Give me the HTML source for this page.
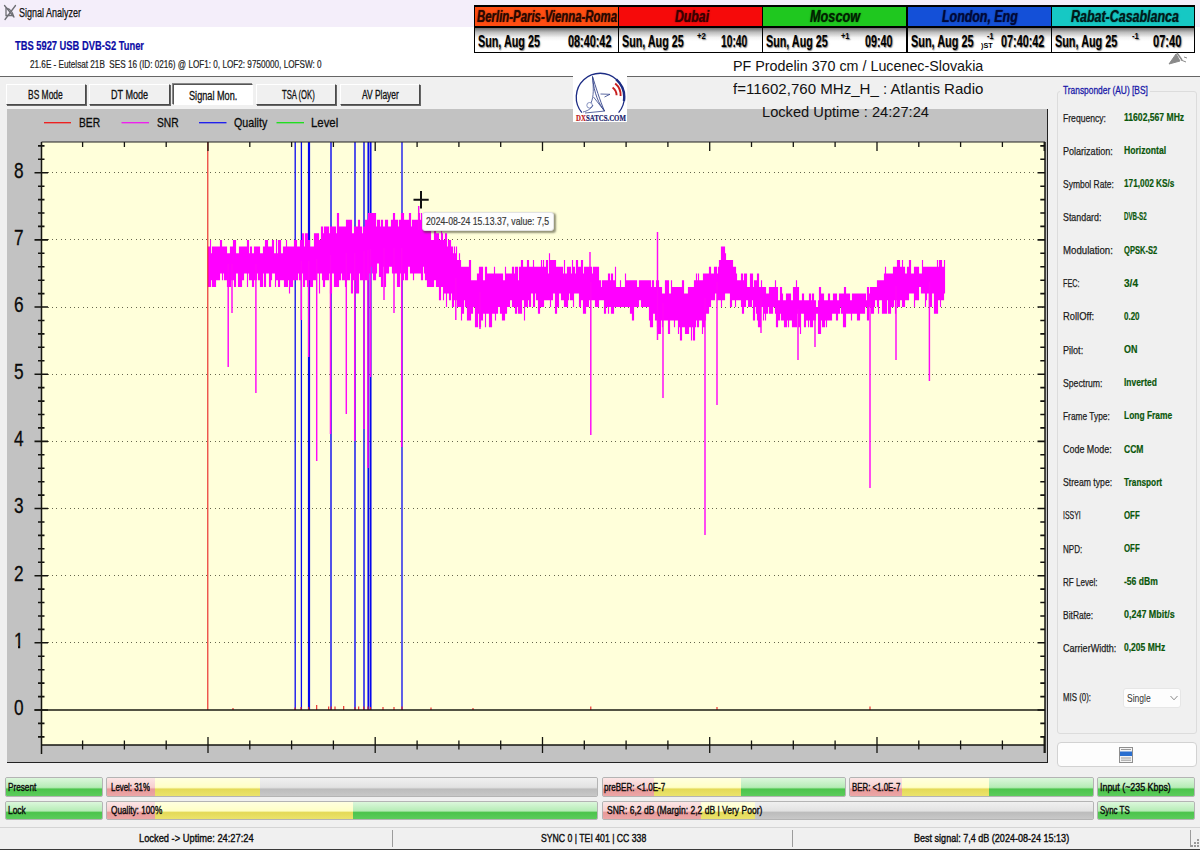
<!DOCTYPE html>
<html lang="en"><head><meta charset="utf-8"><title>Signal Analyzer</title>
<style>

html,body{margin:0;padding:0;}
body{width:1200px;height:850px;overflow:hidden;background:#f0f0f0;}
#root{position:relative;width:1200px;height:850px;overflow:hidden;background:#f0f0f0;font-family:"Liberation Sans",sans-serif;}
#root div,#root svg{position:absolute;box-sizing:border-box;}
.t{position:absolute;white-space:pre;transform-origin:0 50%;display:block;}
.tab{background:#f0f0f0;border:1px solid;border-color:#fff #4a4a4a #4a4a4a #fff;box-shadow:1px 1px 0 #666;}
.tab.sel{background:#fff;border-color:#555 #fff #fff #555;box-shadow:-1px -1px 0 #888;}
.pb{border:1px solid #b4b4b4;border-radius:2px;overflow:hidden;background:#d8d8d8;}
.pb i{position:absolute;top:0;bottom:0;display:block;}
.g{background:linear-gradient(#dcf7dc 0%,#b6ecb6 52%,#4cc44c 62%,#5ccc5c 100%);}
.r{background:linear-gradient(#fce6e6 0%,#f7cfcf 52%,#e79a9a 62%,#eca6a6 100%);}
.y{background:linear-gradient(#ffffe0 0%,#ffffc6 52%,#e4da58 62%,#ebe36c 100%);}
.e{background:linear-gradient(#f0f0f0 0%,#e2e2e2 52%,#bcbcbc 62%,#c8c8c8 100%);}
</style></head>
<body>
<div id="root">
<div style="left:0;top:0;width:1200px;height:27px;background:#f4eefa"></div>
<div style="left:0;top:27px;width:1200px;height:50px;background:#fff"></div>
<div style="left:0;top:76.2px;width:1200px;height:1.3px;background:#666"></div>
<svg style="left:3px;top:4px" width="14" height="17" viewBox="0 0 14 17"><g fill="none" stroke="#6e6e74" stroke-width="1.3" stroke-linecap="round"><path d="M1.5 1.5 L11 13"/><path d="M12.5 1.5 L2 15.5"/><path d="M3 4 L3 11.5 L10.5 11.5"/><path d="M4 4.5 C7 5 9.5 8 10 11"/></g></svg>
<div class="tab" style="left:5.5px;top:84px;width:80.5px;height:21px"></div>
<div class="tab" style="left:89px;top:84px;width:80.5px;height:21px"></div>
<div class="tab sel" style="left:172.5px;top:84px;width:80.0px;height:21px"></div>
<div class="tab" style="left:256px;top:84px;width:80px;height:21px"></div>
<div class="tab" style="left:340px;top:84px;width:80px;height:21px"></div>
<div style="left:473.5px;top:5px;width:721.5px;height:47.5px;background:#000"></div>
<div style="left:475px;top:6.5px;width:142.5px;height:19.5px;background:#ff4d12"></div>
<div style="left:475px;top:28px;width:142.5px;height:23.5px;background:linear-gradient(#6e6e6e 0%,#bdbdbd 18%,#f4f4f4 40%,#ffffff 55%)"></div>
<div style="left:619px;top:6.5px;width:142.5px;height:19.5px;background:#f60a0a"></div>
<div style="left:619px;top:28px;width:142.5px;height:23.5px;background:linear-gradient(#6e6e6e 0%,#bdbdbd 18%,#f4f4f4 40%,#ffffff 55%)"></div>
<div style="left:763px;top:6.5px;width:143.0px;height:19.5px;background:#1fc81f"></div>
<div style="left:763px;top:28px;width:143.0px;height:23.5px;background:linear-gradient(#6e6e6e 0%,#bdbdbd 18%,#f4f4f4 40%,#ffffff 55%)"></div>
<div style="left:907.5px;top:6.5px;width:143.0px;height:19.5px;background:#1450d8"></div>
<div style="left:907.5px;top:28px;width:143.0px;height:23.5px;background:linear-gradient(#6e6e6e 0%,#bdbdbd 18%,#f4f4f4 40%,#ffffff 55%)"></div>
<div style="left:1052px;top:6.5px;width:142.0px;height:19.5px;background:#16c8c4"></div>
<div style="left:1052px;top:28px;width:142.0px;height:23.5px;background:linear-gradient(#6e6e6e 0%,#bdbdbd 18%,#f4f4f4 40%,#ffffff 55%)"></div>
<svg style="left:1168px;top:51px" width="22" height="15" viewBox="0 0 22 15"><g fill="#8a8a8a" stroke="#8a8a8a" stroke-width="1"><path d="M1 13 L8 3 L12 10 Z"/><path d="M9 2 L14 9" fill="none" stroke-width="1.5"/><path d="M13 9 l5 2 m-2 -5 l3 1" fill="none"/></g></svg>
<div style="left:6.5px;top:109px;width:1041px;height:654px;background:#c2c2c2;border-right:1.5px solid #222;border-bottom:1.5px solid #222"></div>
<svg style="left:0;top:100px" width="1060" height="670" viewBox="0 100 1060 670"><rect x="41.5" y="142" width="1003.5" height="603" fill="#ffffda"/><path d="M47.5 642.8H1045M47.5 575.7H1045M47.5 508.5H1045M47.5 441.4H1045M47.5 374.2H1045M47.5 307.0H1045M47.5 239.9H1045M47.5 172.7H1045" stroke="#66664c" stroke-width="1" stroke-dasharray="1 3.4" fill="none" shape-rendering="crispEdges"/><path d="M295.2 142V710" stroke="#0808ee" stroke-width="1.3" fill="none"/><path d="M301.4 142V710" stroke="#0808ee" stroke-width="1.3" fill="none"/><path d="M309 142V710" stroke="#0808ee" stroke-width="2.2" fill="none"/><path d="M331 142V710" stroke="#0808ee" stroke-width="1.4" fill="none"/><path d="M355 142V710" stroke="#0808ee" stroke-width="1.4" fill="none"/><path d="M364 142V710" stroke="#0808ee" stroke-width="1.4" fill="none"/><path d="M368.3 142V710" stroke="#0808ee" stroke-width="1.7" fill="none"/><path d="M370.6 142V710" stroke="#0808ee" stroke-width="1.9" fill="none"/><path d="M402 142V710" stroke="#0808ee" stroke-width="1.3" fill="none"/><path d="M208.5 246.6V286.9M209.5 246.6V286.9M210.5 239.9V286.9M211.5 253.3V280.2M212.5 246.6V286.9M213.5 246.6V286.9M214.5 246.6V286.9M215.5 246.6V286.9M216.5 246.6V280.2M217.5 246.6V280.2M218.5 246.6V280.2M219.5 246.6V280.2M220.5 239.9V273.5M221.5 239.9V273.5M222.5 246.6V280.2M223.5 246.6V273.5M224.5 246.6V280.2M225.5 246.6V280.2M226.5 246.6V280.2M227.5 253.3V286.9M228.5 253.3V286.9M229.5 253.3V286.9M230.5 246.6V286.9M231.5 246.6V280.2M232.5 246.6V280.2M233.5 239.9V280.2M234.5 239.9V286.9M235.5 239.9V286.9M236.5 253.3V273.5M237.5 253.3V273.5M238.5 253.3V286.9M239.5 246.6V286.9M240.5 246.6V286.9M241.5 246.6V286.9M242.5 246.6V280.2M243.5 246.6V280.2M244.5 246.6V273.5M245.5 246.6V273.5M246.5 246.6V273.5M247.5 239.9V286.9M248.5 239.9V273.5M249.5 253.3V280.2M250.5 246.6V280.2M251.5 246.6V280.2M252.5 253.3V286.9M253.5 253.3V286.9M254.5 246.6V280.2M255.5 246.6V280.2M256.5 246.6V280.2M257.5 246.6V273.5M258.5 246.6V280.2M259.5 246.6V280.2M260.5 253.3V286.9M261.5 253.3V286.9M262.5 253.3V286.9M263.5 246.6V273.5M264.5 246.6V286.9M265.5 239.9V286.9M266.5 239.9V273.5M267.5 239.9V273.5M268.5 246.6V273.5M269.5 246.6V286.9M270.5 246.6V286.9M271.5 246.6V280.2M272.5 239.9V273.5M273.5 239.9V273.5M274.5 253.3V273.5M275.5 253.3V286.9M276.5 239.9V280.2M277.5 253.3V280.2M278.5 239.9V286.9M279.5 239.9V286.9M280.5 239.9V280.2M281.5 253.3V280.2M282.5 253.3V280.2M283.5 246.6V280.2M284.5 246.6V286.9M285.5 246.6V286.9M286.5 239.9V286.9M287.5 246.6V286.9M288.5 246.6V280.2M289.5 246.6V293.6M290.5 246.6V286.9M291.5 246.6V286.9M292.5 246.6V286.9M293.5 246.6V280.2M294.5 239.9V280.2M295.5 239.9V280.2M296.5 239.9V280.2M297.5 246.6V280.2M298.5 246.6V273.5M299.5 246.6V280.2M300.5 239.9V280.2M301.5 239.9V273.5M302.5 233.2V273.5M303.5 233.2V286.9M304.5 246.6V286.9M305.5 233.2V280.2M306.5 233.2V280.2M307.5 233.2V286.9M308.5 239.9V280.2M309.5 239.9V280.2M310.5 246.6V286.9M311.5 246.6V286.9M312.5 246.6V286.9M313.5 246.6V280.2M314.5 233.2V280.2M315.5 233.2V280.2M316.5 233.2V280.2M317.5 233.2V273.5M318.5 233.2V273.5M319.5 239.9V293.6M320.5 239.9V273.5M321.5 226.4V273.5M322.5 226.4V280.2M323.5 233.2V286.9M324.5 226.4V286.9M325.5 226.4V280.2M326.5 226.4V280.2M327.5 226.4V280.2M328.5 226.4V280.2M329.5 233.2V273.5M330.5 226.4V293.6M331.5 226.4V293.6M332.5 226.4V273.5M333.5 226.4V273.5M334.5 226.4V286.9M335.5 226.4V286.9M336.5 233.2V286.9M337.5 213.0V286.9M338.5 213.0V286.9M339.5 226.4V280.2M340.5 226.4V280.2M341.5 226.4V273.5M342.5 226.4V280.2M343.5 226.4V280.2M344.5 226.4V280.2M345.5 226.4V286.9M346.5 219.7V280.2M347.5 219.7V280.2M348.5 219.7V280.2M349.5 219.7V280.2M350.5 219.7V273.5M351.5 219.7V293.6M352.5 233.2V293.6M353.5 233.2V280.2M354.5 226.4V280.2M355.5 226.4V280.2M356.5 226.4V293.6M357.5 226.4V293.6M358.5 219.7V293.6M359.5 219.7V273.5M360.5 226.4V280.2M361.5 226.4V280.2M362.5 233.2V280.2M363.5 226.4V280.2M364.5 226.4V280.2M365.5 219.7V280.2M366.5 219.7V280.2M367.5 219.7V280.2M368.5 213.0V280.2M369.5 213.0V273.5M370.5 213.0V266.7M371.5 213.0V266.7M372.5 213.0V273.5M373.5 213.0V280.2M374.5 213.0V280.2M375.5 213.0V280.2M376.5 226.4V273.5M377.5 219.7V263.5M378.5 219.7V263.5M379.5 219.7V276.9M380.5 226.4V276.9M381.5 219.7V286.9M382.5 219.7V286.9M383.5 226.4V266.7M384.5 226.4V286.9M385.5 219.7V286.9M386.5 219.7V273.5M387.5 219.7V273.5M388.5 226.4V273.5M389.5 226.4V266.7M390.5 226.4V266.7M391.5 219.7V266.7M392.5 219.7V273.5M393.5 213.0V273.5M394.5 213.0V273.5M395.5 219.7V273.5M396.5 219.7V273.5M397.5 219.7V286.9M398.5 226.4V286.9M399.5 219.7V286.9M400.5 219.7V273.5M401.5 213.0V280.2M402.5 213.0V280.2M403.5 213.0V280.2M404.5 219.7V273.5M405.5 219.7V280.2M406.5 219.7V280.2M407.5 219.7V280.2M408.5 219.7V266.7M409.5 213.0V266.7M410.5 213.0V273.5M411.5 226.4V273.5M412.5 219.7V273.5M413.5 219.7V280.2M414.5 219.7V273.5M415.5 219.7V273.5M416.5 219.7V273.5M417.5 219.7V273.5M418.5 213.0V273.5M419.5 213.0V273.5M420.5 219.7V273.5M421.5 213.0V280.2M422.5 219.7V280.2M423.5 219.7V266.7M424.5 219.7V273.5M425.5 226.4V280.2M426.5 226.4V280.2M427.5 226.4V286.9M428.5 219.7V286.9M429.5 219.7V286.9M430.5 226.4V286.9M431.5 239.9V286.9M432.5 239.9V286.9M433.5 239.9V286.9M434.5 226.4V280.2M435.5 226.4V280.2M436.5 233.2V286.9M437.5 233.2V286.9M438.5 233.2V286.9M439.5 239.9V300.3M440.5 239.9V300.3M441.5 226.4V286.9M442.5 233.2V286.9M443.5 239.9V300.3M444.5 239.9V293.6M445.5 233.2V293.6M446.5 233.2V307.0M447.5 246.6V293.6M448.5 239.9V293.6M449.5 239.9V300.3M450.5 239.9V300.3M451.5 246.6V293.6M452.5 246.6V307.0M453.5 253.3V307.0M454.5 246.6V300.3M455.5 253.3V300.3M456.5 246.6V300.3M457.5 260.0V307.0M458.5 260.0V307.0M459.5 253.3V307.0M460.5 260.0V307.0M461.5 266.7V320.5M462.5 266.7V313.8M463.5 266.7V313.8M464.5 266.7V300.3M465.5 266.7V307.0M466.5 266.7V307.0M467.5 266.7V320.5M468.5 266.7V320.5M469.5 260.0V320.5M470.5 260.0V320.5M471.5 280.2V313.8M472.5 280.2V313.8M473.5 280.2V307.0M474.5 280.2V307.0M475.5 280.2V327.2M476.5 280.2V327.2M477.5 273.5V327.2M478.5 273.5V313.8M479.5 266.7V327.2M480.5 266.7V327.2M481.5 266.7V320.5M482.5 266.7V320.5M483.5 280.2V313.8M484.5 280.2V313.8M485.5 266.7V327.2M486.5 266.7V313.8M487.5 273.5V313.8M488.5 273.5V313.8M489.5 273.5V327.2M490.5 273.5V327.2M491.5 273.5V327.2M492.5 273.5V313.8M493.5 273.5V313.8M494.5 266.7V313.8M495.5 273.5V320.5M496.5 273.5V313.8M497.5 273.5V313.8M498.5 273.5V307.0M499.5 273.5V307.0M500.5 273.5V313.8M501.5 273.5V313.8M502.5 273.5V320.5M503.5 280.2V320.5M504.5 280.2V320.5M505.5 266.7V313.8M506.5 273.5V313.8M507.5 273.5V307.0M508.5 273.5V307.0M509.5 273.5V307.0M510.5 273.5V300.3M511.5 273.5V300.3M512.5 266.7V307.0M513.5 266.7V307.0M514.5 273.5V307.0M515.5 266.7V313.8M516.5 266.7V313.8M517.5 266.7V307.0M518.5 280.2V313.8M519.5 266.7V313.8M520.5 266.7V313.8M521.5 260.0V313.8M522.5 260.0V300.3M523.5 266.7V300.3M524.5 266.7V320.5M525.5 266.7V307.0M526.5 266.7V307.0M527.5 260.0V307.0M528.5 260.0V300.3M529.5 266.7V307.0M530.5 266.7V307.0M531.5 266.7V293.6M532.5 266.7V293.6M533.5 260.0V307.0M534.5 266.7V307.0M535.5 266.7V293.6M536.5 266.7V300.3M537.5 266.7V300.3M538.5 266.7V313.8M539.5 266.7V313.8M540.5 266.7V307.0M541.5 260.0V307.0M542.5 266.7V307.0M543.5 260.0V307.0M544.5 266.7V300.3M545.5 266.7V300.3M546.5 260.0V300.3M547.5 260.0V300.3M548.5 273.5V300.3M549.5 253.3V300.3M550.5 260.0V307.0M551.5 260.0V300.3M552.5 260.0V300.3M553.5 260.0V293.6M554.5 260.0V293.6M555.5 260.0V313.8M556.5 266.7V313.8M557.5 266.7V307.0M558.5 266.7V307.0M559.5 266.7V293.6M560.5 266.7V293.6M561.5 266.7V300.3M562.5 266.7V300.3M563.5 273.5V300.3M564.5 260.0V307.0M565.5 273.5V307.0M566.5 273.5V307.0M567.5 266.7V307.0M568.5 266.7V300.3M569.5 266.7V293.6M570.5 266.7V300.3M571.5 273.5V300.3M572.5 260.0V300.3M573.5 266.7V307.0M574.5 266.7V293.6M575.5 273.5V293.6M576.5 260.0V293.6M577.5 260.0V293.6M578.5 266.7V293.6M579.5 266.7V307.0M580.5 266.7V307.0M581.5 260.0V300.3M582.5 260.0V300.3M583.5 273.5V313.8M584.5 266.7V313.8M585.5 266.7V313.8M586.5 266.7V307.0M587.5 266.7V307.0M588.5 266.7V307.0M589.5 266.7V300.3M590.5 266.7V300.3M591.5 266.7V300.3M592.5 273.5V300.3M593.5 266.7V300.3M594.5 266.7V300.3M595.5 266.7V307.0M596.5 266.7V307.0M597.5 266.7V307.0M598.5 266.7V307.0M599.5 280.2V300.3M600.5 280.2V300.3M601.5 286.9V300.3M602.5 280.2V300.3M603.5 280.2V300.3M604.5 280.2V313.8M605.5 280.2V313.8M606.5 280.2V307.0M607.5 280.2V307.0M608.5 273.5V313.8M609.5 273.5V307.0M610.5 280.2V307.0M611.5 273.5V313.8M612.5 273.5V313.8M613.5 280.2V313.8M614.5 280.2V307.0M615.5 266.7V307.0M616.5 286.9V307.0M617.5 286.9V307.0M618.5 286.9V307.0M619.5 286.9V307.0M620.5 280.2V307.0M621.5 286.9V307.0M622.5 286.9V307.0M623.5 286.9V307.0M624.5 286.9V307.0M625.5 273.5V307.0M626.5 280.2V307.0M627.5 280.2V307.0M628.5 280.2V307.0M629.5 280.2V307.0M630.5 280.2V313.8M631.5 280.2V313.8M632.5 280.2V320.5M633.5 280.2V320.5M634.5 280.2V307.0M635.5 280.2V307.0M636.5 280.2V307.0M637.5 286.9V307.0M638.5 286.9V307.0M639.5 280.2V300.3M640.5 280.2V300.3M641.5 280.2V307.0M642.5 280.2V307.0M643.5 280.2V307.0M644.5 280.2V307.0M645.5 280.2V307.0M646.5 280.2V307.0M647.5 280.2V307.0M648.5 280.2V307.0M649.5 280.2V320.5M650.5 280.2V327.2M651.5 286.9V327.2M652.5 280.2V327.2M653.5 280.2V313.8M654.5 286.9V313.8M655.5 286.9V320.5M656.5 280.2V320.5M657.5 280.2V327.2M658.5 280.2V333.9M659.5 286.9V333.9M660.5 286.9V333.9M661.5 286.9V320.5M662.5 293.6V327.2M663.5 293.6V320.5M664.5 293.6V320.5M665.5 280.2V320.5M666.5 280.2V320.5M667.5 280.2V320.5M668.5 280.2V333.9M669.5 293.6V333.9M670.5 293.6V320.5M671.5 280.2V320.5M672.5 286.9V320.5M673.5 286.9V320.5M674.5 286.9V327.2M675.5 286.9V320.5M676.5 286.9V320.5M677.5 286.9V320.5M678.5 286.9V333.9M679.5 286.9V327.2M680.5 286.9V340.6M681.5 286.9V340.6M682.5 280.2V327.2M683.5 280.2V327.2M684.5 293.6V327.2M685.5 293.6V333.9M686.5 293.6V333.9M687.5 293.6V333.9M688.5 286.9V333.9M689.5 286.9V327.2M690.5 286.9V327.2M691.5 286.9V340.6M692.5 286.9V327.2M693.5 286.9V340.6M694.5 280.2V340.6M695.5 280.2V327.2M696.5 273.5V320.5M697.5 280.2V327.2M698.5 273.5V327.2M699.5 280.2V320.5M700.5 280.2V320.5M701.5 280.2V320.5M702.5 280.2V333.9M703.5 273.5V327.2M704.5 273.5V327.2M705.5 273.5V320.5M706.5 273.5V313.8M707.5 273.5V313.8M708.5 273.5V313.8M709.5 266.7V307.0M710.5 266.7V307.0M711.5 273.5V300.3M712.5 273.5V300.3M713.5 273.5V300.3M714.5 266.7V300.3M715.5 266.7V293.6M716.5 266.7V293.6M717.5 273.5V300.3M718.5 266.7V300.3M719.5 260.0V300.3M720.5 260.0V300.3M721.5 246.6V307.0M722.5 246.6V300.3M723.5 246.6V300.3M724.5 246.6V300.3M725.5 253.3V293.6M726.5 260.0V293.6M727.5 260.0V293.6M728.5 260.0V293.6M729.5 260.0V293.6M730.5 260.0V307.0M731.5 260.0V307.0M732.5 260.0V300.3M733.5 266.7V300.3M734.5 266.7V300.3M735.5 266.7V307.0M736.5 273.5V300.3M737.5 280.2V300.3M738.5 280.2V300.3M739.5 280.2V300.3M740.5 280.2V300.3M741.5 273.5V307.0M742.5 273.5V313.8M743.5 280.2V313.8M744.5 273.5V307.0M745.5 273.5V307.0M746.5 273.5V300.3M747.5 286.9V300.3M748.5 286.9V307.0M749.5 286.9V307.0M750.5 273.5V307.0M751.5 273.5V307.0M752.5 273.5V300.3M753.5 286.9V320.5M754.5 280.2V320.5M755.5 280.2V307.0M756.5 280.2V313.8M757.5 273.5V320.5M758.5 273.5V327.2M759.5 286.9V327.2M760.5 286.9V327.2M761.5 280.2V307.0M762.5 286.9V307.0M763.5 286.9V320.5M764.5 286.9V313.8M765.5 286.9V320.5M766.5 293.6V313.8M767.5 293.6V313.8M768.5 293.6V307.0M769.5 286.9V313.8M770.5 286.9V313.8M771.5 286.9V313.8M772.5 286.9V313.8M773.5 286.9V307.0M774.5 286.9V307.0M775.5 280.2V313.8M776.5 286.9V327.2M777.5 286.9V327.2M778.5 300.3V320.5M779.5 300.3V320.5M780.5 286.9V313.8M781.5 286.9V320.5M782.5 293.6V320.5M783.5 300.3V320.5M784.5 300.3V327.2M785.5 300.3V327.2M786.5 293.6V327.2M787.5 293.6V320.5M788.5 293.6V327.2M789.5 293.6V320.5M790.5 293.6V320.5M791.5 300.3V320.5M792.5 300.3V327.2M793.5 286.9V327.2M794.5 286.9V327.2M795.5 286.9V327.2M796.5 280.2V327.2M797.5 286.9V313.8M798.5 286.9V327.2M799.5 300.3V327.2M800.5 300.3V333.9M801.5 300.3V313.8M802.5 293.6V313.8M803.5 293.6V313.8M804.5 300.3V327.2M805.5 300.3V327.2M806.5 300.3V320.5M807.5 300.3V320.5M808.5 300.3V327.2M809.5 293.6V320.5M810.5 293.6V327.2M811.5 300.3V327.2M812.5 293.6V327.2M813.5 293.6V320.5M814.5 300.3V320.5M815.5 300.3V320.5M816.5 307.0V313.8M817.5 307.0V313.8M818.5 300.3V333.9M819.5 286.9V333.9M820.5 286.9V333.9M821.5 293.6V320.5M822.5 293.6V327.2M823.5 293.6V327.2M824.5 300.3V327.2M825.5 300.3V320.5M826.5 300.3V327.2M827.5 300.3V320.5M828.5 293.6V320.5M829.5 293.6V320.5M830.5 300.3V320.5M831.5 300.3V320.5M832.5 300.3V313.8M833.5 293.6V313.8M834.5 293.6V313.8M835.5 293.6V313.8M836.5 293.6V320.5M837.5 300.3V320.5M838.5 300.3V313.8M839.5 293.6V313.8M840.5 293.6V307.0M841.5 293.6V313.8M842.5 293.6V313.8M843.5 293.6V327.2M844.5 286.9V327.2M845.5 286.9V327.2M846.5 293.6V313.8M847.5 293.6V313.8M848.5 293.6V313.8M849.5 293.6V313.8M850.5 300.3V313.8M851.5 300.3V320.5M852.5 293.6V313.8M853.5 293.6V313.8M854.5 293.6V313.8M855.5 293.6V313.8M856.5 293.6V313.8M857.5 293.6V320.5M858.5 293.6V320.5M859.5 293.6V320.5M860.5 293.6V313.8M861.5 293.6V313.8M862.5 293.6V313.8M863.5 293.6V313.8M864.5 293.6V313.8M865.5 293.6V307.0M866.5 300.3V307.0M867.5 286.9V320.5M868.5 286.9V320.5M869.5 293.6V307.0M870.5 286.9V307.0M871.5 286.9V313.8M872.5 286.9V313.8M873.5 286.9V313.8M874.5 286.9V307.0M875.5 286.9V300.3M876.5 286.9V300.3M877.5 280.2V307.0M878.5 280.2V313.8M879.5 280.2V300.3M880.5 280.2V300.3M881.5 280.2V300.3M882.5 280.2V313.8M883.5 280.2V313.8M884.5 273.5V313.8M885.5 266.7V313.8M886.5 273.5V313.8M887.5 273.5V300.3M888.5 273.5V313.8M889.5 273.5V313.8M890.5 273.5V313.8M891.5 273.5V307.0M892.5 273.5V307.0M893.5 266.7V307.0M894.5 266.7V300.3M895.5 266.7V313.8M896.5 266.7V300.3M897.5 260.0V307.0M898.5 260.0V307.0M899.5 260.0V307.0M900.5 266.7V300.3M901.5 266.7V300.3M902.5 260.0V307.0M903.5 266.7V307.0M904.5 266.7V307.0M905.5 273.5V300.3M906.5 273.5V300.3M907.5 266.7V300.3M908.5 266.7V300.3M909.5 260.0V293.6M910.5 260.0V293.6M911.5 273.5V293.6M912.5 273.5V293.6M913.5 273.5V293.6M914.5 266.7V307.0M915.5 266.7V300.3M916.5 266.7V300.3M917.5 266.7V300.3M918.5 266.7V300.3M919.5 273.5V286.9M920.5 273.5V286.9M921.5 273.5V293.6M922.5 260.0V293.6M923.5 266.7V293.6M924.5 266.7V293.6M925.5 266.7V307.0M926.5 266.7V300.3M927.5 266.7V293.6M928.5 266.7V293.6M929.5 266.7V307.0M930.5 266.7V307.0M931.5 266.7V307.0M932.5 266.7V293.6M933.5 266.7V293.6M934.5 266.7V313.8M935.5 266.7V313.8M936.5 266.7V313.8M937.5 260.0V313.8M938.5 266.7V300.3M939.5 260.0V300.3M940.5 260.0V307.0M941.5 260.0V300.3M942.5 266.7V300.3M943.5 266.7V300.3M944.5 260.0V293.6" stroke="#ff00ff" stroke-width="1.15" fill="none"/><path d="M228.2 264V367M232 264V313M255.9 264V393M301.3 261V320M308.7 261V357M316.7 259V461M330.5 255V434M346.3 253V414M354.7 253V441M364 251V429M368 250V468M370.5 249V377M401.7 248V447M384 248V300M394 248V313M455.8 278V320M480 292V329M590.8 282V435M663 303V398M705 298V535M717 282V405M761 298V333M798 309V360M815 310V347M870 302V488M896 286V360M929.4 282V381M657.5 300V232M657.5 300V340M418.7 230V206M590 270V252" stroke="#ff08f8" stroke-width="1.45" fill="none"/><path d="M207.8 142V710M233 710v-2M295 710v-2.5M301 710v-3M308.7 710v-3M316.7 710v-5M328.7 710v-3.5M331.2 710v-3.5M335 710v-3.5M343.7 710v-4M355 710v-3M358.7 710v-3.5M363.7 710v-3.5M368 710v-3.5M370.5 710v-3M383 710v-3M394 710v-3M402 710v-3.5M431 710v-2.5M473 710v-2M590.8 710v-3.5M717 710v-3M870 710v-3.5" stroke="#e82020" stroke-width="1.1" fill="none"/><path d="M34.5 710H1045" stroke="#1a1a10" stroke-width="1.6" fill="none"/><path d="M41.5 142H1045" stroke="#222" stroke-width="1" fill="none"/><path d="M41.5 142V754M1045 142V753M41.5 745H1045" stroke="#151510" stroke-width="1.5" fill="none"/><path d="M38.0 736.9H44.5M1040.3 736.9H1045M38.0 723.4H44.5M1040.3 723.4H1045M34.5 710.0H48.0M1037.5 710.0H1045M38.0 696.6H44.5M1040.3 696.6H1045M38.0 683.1H44.5M1040.3 683.1H1045M38.0 669.7H44.5M1040.3 669.7H1045M38.0 656.3H44.5M1040.3 656.3H1045M34.5 642.8H48.0M1037.5 642.8H1045M38.0 629.4H44.5M1040.3 629.4H1045M38.0 616.0H44.5M1040.3 616.0H1045M38.0 602.5H44.5M1040.3 602.5H1045M38.0 589.1H44.5M1040.3 589.1H1045M34.5 575.7H48.0M1037.5 575.7H1045M38.0 562.2H44.5M1040.3 562.2H1045M38.0 548.8H44.5M1040.3 548.8H1045M38.0 535.4H44.5M1040.3 535.4H1045M38.0 522.0H44.5M1040.3 522.0H1045M34.5 508.5H48.0M1037.5 508.5H1045M38.0 495.1H44.5M1040.3 495.1H1045M38.0 481.7H44.5M1040.3 481.7H1045M38.0 468.2H44.5M1040.3 468.2H1045M38.0 454.8H44.5M1040.3 454.8H1045M34.5 441.4H48.0M1037.5 441.4H1045M38.0 427.9H44.5M1040.3 427.9H1045M38.0 414.5H44.5M1040.3 414.5H1045M38.0 401.1H44.5M1040.3 401.1H1045M38.0 387.6H44.5M1040.3 387.6H1045M34.5 374.2H48.0M1037.5 374.2H1045M38.0 360.8H44.5M1040.3 360.8H1045M38.0 347.3H44.5M1040.3 347.3H1045M38.0 333.9H44.5M1040.3 333.9H1045M38.0 320.5H44.5M1040.3 320.5H1045M34.5 307.0H48.0M1037.5 307.0H1045M38.0 293.6H44.5M1040.3 293.6H1045M38.0 280.2H44.5M1040.3 280.2H1045M38.0 266.7H44.5M1040.3 266.7H1045M38.0 253.3H44.5M1040.3 253.3H1045M34.5 239.9H48.0M1037.5 239.9H1045M38.0 226.4H44.5M1040.3 226.4H1045M38.0 213.0H44.5M1040.3 213.0H1045M38.0 199.6H44.5M1040.3 199.6H1045M38.0 186.2H44.5M1040.3 186.2H1045M34.5 172.7H48.0M1037.5 172.7H1045M38.0 159.3H44.5M1040.3 159.3H1045M38.0 145.9H44.5M1040.3 145.9H1045" stroke="#151510" stroke-width="1.6" fill="none"/><path d="M82.6 142v5M82.6 740.5V749.5M124.4 142v5M124.4 740.5V749.5M166.2 142v5M166.2 740.5V749.5M208.0 142v9M208.0 737V753M249.8 142v5M249.8 740.5V749.5M291.6 142v5M291.6 740.5V749.5M333.4 142v5M333.4 740.5V749.5M375.2 142v9M375.2 737V753M417.1 142v5M417.1 740.5V749.5M458.9 142v5M458.9 740.5V749.5M500.7 142v5M500.7 740.5V749.5M542.5 142v9M542.5 737V753M584.3 142v5M584.3 740.5V749.5M626.1 142v5M626.1 740.5V749.5M667.9 142v5M667.9 740.5V749.5M709.7 142v9M709.7 737V753M751.5 142v5M751.5 740.5V749.5M793.3 142v5M793.3 740.5V749.5M835.1 142v5M835.1 740.5V749.5M877.0 142v9M877.0 737V753M918.8 142v5M918.8 740.5V749.5M960.6 142v5M960.6 740.5V749.5M1002.4 142v5M1002.4 740.5V749.5M1044.2 142v9M1044.2 737V753" stroke="#151510" stroke-width="1.3" fill="none"/><path d="M44 122.7H71" stroke="#f01818" stroke-width="1.3" fill="none"/><path d="M121.5 122.7H149" stroke="#f018f0" stroke-width="1.3" fill="none"/><path d="M199 122.7H226.5" stroke="#1818f0" stroke-width="1.3" fill="none"/><path d="M276.5 122.7H304" stroke="#18e018" stroke-width="1.3" fill="none"/></svg>
<div style="left:421.5px;top:211.5px;width:132px;height:19.5px;background:#fdfdfd;border:1px solid #e2e2e2;border-radius:3px;box-shadow:1.5px 1.5px 2px rgba(60,60,40,.55)"></div>
<svg style="left:412px;top:190px" width="19" height="20" viewBox="0 0 19 20"><path d="M9 1V18.5M1.5 9.7H16.7" stroke="#111" stroke-width="2" fill="none"/></svg>
<div style="left:573px;top:70px;width:54px;height:52px;background:#fff"></div>
<svg style="left:573px;top:70px" width="54" height="52" viewBox="0 0 54 52">
<path d="M45.6 42.7 A24 24 0 1 0 8.9 42.7" fill="none" stroke="#1c2c84" stroke-width="1.3"/>
<path d="M50.9 31 A24 24 0 0 0 43.2 9.4" fill="none" stroke="#1c2c84" stroke-width="2.4"/>
<path d="M42.2 13.5 A15 15 0 0 1 47.6 26" fill="none" stroke="#c81e1e" stroke-width="1.9"/>
<path d="M39.6 17.5 A10 10 0 0 1 43.6 25.2" fill="none" stroke="#c81e1e" stroke-width="1.9"/>
<path d="M19.5 6.5 C22.5 16 27 31 31.5 41 C26 34 21 24 19.5 6.5 Z" fill="#fdfdff" stroke="#34448a" stroke-width="0.9"/>
<path d="M19.5 6.5 C20.5 18 21 26 18 33 M20.5 27 L31.5 41" fill="none" stroke="#34448a" stroke-width="0.8"/>
<path d="M27.5 24 L37 24.3 L31.5 27" fill="none" stroke="#34448a" stroke-width="0.8"/>
<circle cx="16.6" cy="35.3" r="2.8" fill="none" stroke="#7886b8" stroke-width="0.9"/>
<path d="M10 42 C14 41 17.5 39.5 20 35 M12 43 L32 41" fill="none" stroke="#34448a" stroke-width="0.8"/>
</svg>
<div style="left:1056.5px;top:90.5px;width:140px;height:643px;border:1px solid #dcdcdc;border-radius:3px"></div>
<div style="left:1060px;top:84px;width:90px;height:14px;background:#f0f0f0"></div>
<div style="left:1122.5px;top:688px;width:58.5px;height:19.5px;background:#fdfdfd;border:1px solid #e6e6e6;border-radius:3px"></div>
<svg style="left:1168px;top:693px" width="12" height="10" viewBox="0 0 12 10"><path d="M2.5 3 L6 6.8 L9.5 3" fill="none" stroke="#8a8a8a" stroke-width="1"/></svg>
<div style="left:1056.5px;top:742px;width:140px;height:24.5px;background:#fdfdfd;border:1px solid #d2d2d2;border-radius:4px"></div>
<svg style="left:1119px;top:746.5px" width="14" height="16" viewBox="0 0 14 16"><rect x="0.5" y="0.5" width="13" height="15" fill="#f4f4f4" stroke="#8e8e8e"/><rect x="1" y="4.5" width="12" height="4.5" fill="#2a6fd0"/><path d="M2 2.5h10M2 11h10M2 13.2h10" stroke="#9a9a9a" stroke-width="1"/></svg>
<div class="pb" style="left:5px;top:777px;width:97.5px;height:19.5px"><i class="g" style="left:-1.0px;width:98.5px"></i></div>
<div class="pb" style="left:5px;top:800.5px;width:97.5px;height:19.5px"><i class="g" style="left:-1.0px;width:98.5px"></i></div>
<div class="pb" style="left:106px;top:777px;width:492px;height:19.5px"><i class="r" style="left:-1.0px;width:49.5px"></i><i class="y" style="left:48.0px;width:105.5px"></i><i class="e" style="left:153.0px;width:338.5px"></i></div>
<div class="pb" style="left:106px;top:800.5px;width:492px;height:19.5px"><i class="r" style="left:-1.0px;width:49.5px"></i><i class="y" style="left:48.0px;width:198.0px"></i><i class="g" style="left:245.5px;width:246.0px"></i></div>
<div class="pb" style="left:601.5px;top:777px;width:244.5px;height:19.5px"><i class="r" style="left:-1.0px;width:53.0px"></i><i class="y" style="left:51.5px;width:87.5px"></i><i class="g" style="left:138.5px;width:105.5px"></i></div>
<div class="pb" style="left:848.5px;top:777px;width:245.0px;height:19.5px"><i class="r" style="left:-1.0px;width:54.0px"></i><i class="y" style="left:52.5px;width:87.5px"></i><i class="g" style="left:139.5px;width:105.5px"></i></div>
<div class="pb" style="left:601.5px;top:800.5px;width:492.0px;height:19.5px"><i class="r" style="left:-1.0px;width:100.0px"></i><i class="y" style="left:98.5px;width:54.5px"></i><i class="e" style="left:152.5px;width:339.5px"></i></div>
<div class="pb" style="left:1097px;top:777px;width:98px;height:19.5px"><i class="g" style="left:-1.0px;width:98.5px"></i></div>
<div class="pb" style="left:1097px;top:800.5px;width:98px;height:19.5px"><i class="g" style="left:-1.0px;width:98.5px"></i></div>
<div style="left:0;top:826.5px;width:1200px;height:1px;background:#d4d4d4"></div>
<div style="left:0;top:848.5px;width:1200px;height:1.5px;background:#3a3a3a"></div>
<div style="left:392px;top:830px;width:1px;height:17px;background:#9c9c9c"></div>
<div style="left:792px;top:830px;width:1px;height:17px;background:#9c9c9c"></div>
<div style="left:1190px;top:830px;width:1px;height:17px;background:#9c9c9c"></div>
<svg style="left:1191px;top:838px" width="9" height="10" viewBox="0 0 9 10"><g fill="#9a9a9a"><rect x="6" y="1" width="2" height="2"/><rect x="3" y="4" width="2" height="2"/><rect x="6" y="4" width="2" height="2"/><rect x="0" y="7" width="2" height="2"/><rect x="3" y="7" width="2" height="2"/><rect x="6" y="7" width="2" height="2"/></g></svg>
<span class="t" style='left:19.0px;top:3.6px;height:18px;line-height:18px;font-size:13.5px;font-weight:normal;color:#111;font-style:normal;font-family:"Liberation Sans", sans-serif;transform:scaleX(0.6667);-webkit-text-stroke:0.25px #111;'>Signal Analyzer</span>
<span class="t" style='left:14.5px;top:38.2px;height:16px;line-height:16px;font-size:12.5px;font-weight:bold;color:#0c0ca6;font-style:normal;font-family:"Liberation Sans", sans-serif;transform:scaleX(0.7468);-webkit-text-stroke:0.2px #0c0ca6;'>TBS 5927 USB DVB-S2 Tuner</span>
<span class="t" style='left:30.0px;top:56.7px;height:14px;line-height:14px;font-size:11px;font-weight:normal;color:#222;font-style:normal;font-family:"Liberation Sans", sans-serif;transform:scaleX(0.7417);-webkit-text-stroke:0.2px #222;'>21.6E - Eutelsat 21B  SES 16 (ID: 0216) @ LOF1: 0, LOF2: 9750000, LOFSW: 0</span>
<span class="t" style='left:28.0px;top:87.0px;height:16px;line-height:16px;font-size:12px;font-weight:normal;color:#111;font-style:normal;font-family:"Liberation Sans", sans-serif;transform:scaleX(0.7041);-webkit-text-stroke:0.3px #111;'>BS Mode</span>
<span class="t" style='left:110.5px;top:87.0px;height:16px;line-height:16px;font-size:12px;font-weight:normal;color:#111;font-style:normal;font-family:"Liberation Sans", sans-serif;transform:scaleX(0.7551);-webkit-text-stroke:0.3px #111;'>DT Mode</span>
<span class="t" style='left:189.0px;top:88.0px;height:16px;line-height:16px;font-size:12px;font-weight:normal;color:#111;font-style:normal;font-family:"Liberation Sans", sans-serif;transform:scaleX(0.7619);-webkit-text-stroke:0.3px #111;'>Signal Mon.</span>
<span class="t" style='left:281.5px;top:87.0px;height:16px;line-height:16px;font-size:12px;font-weight:normal;color:#111;font-style:normal;font-family:"Liberation Sans", sans-serif;transform:scaleX(0.6373);-webkit-text-stroke:0.3px #111;'>TSA (OK)</span>
<span class="t" style='left:361.5px;top:87.0px;height:16px;line-height:16px;font-size:12px;font-weight:normal;color:#111;font-style:normal;font-family:"Liberation Sans", sans-serif;transform:scaleX(0.7019);-webkit-text-stroke:0.3px #111;'>AV Player</span>
<span class="t" style='left:477.0px;top:5.5px;height:21px;line-height:21px;font-size:16.5px;font-weight:bold;color:#2a0800;font-style:italic;font-family:"Liberation Sans", sans-serif;transform:scaleX(0.6897);text-shadow:0 0 1.5px rgba(0,0,0,.7);'>Berlin-Paris-Vienna-Roma</span>
<span class="t" style='left:674.5px;top:5.5px;height:21px;line-height:21px;font-size:16.5px;font-weight:bold;color:#3a0000;font-style:italic;font-family:"Liberation Sans", sans-serif;transform:scaleX(0.7435);text-shadow:0 0 1.5px rgba(0,0,0,.7);'>Dubai</span>
<span class="t" style='left:810.0px;top:5.5px;height:21px;line-height:21px;font-size:16.5px;font-weight:bold;color:#002200;font-style:italic;font-family:"Liberation Sans", sans-serif;transform:scaleX(0.7692);text-shadow:0 0 1.5px rgba(0,0,0,.7);'>Moscow</span>
<span class="t" style='left:941.6px;top:5.5px;height:21px;line-height:21px;font-size:16.5px;font-weight:bold;color:#00083a;font-style:italic;font-family:"Liberation Sans", sans-serif;transform:scaleX(0.7515);text-shadow:0 0 1.5px rgba(0,0,0,.7);'>London, Eng</span>
<span class="t" style='left:1070.5px;top:5.5px;height:21px;line-height:21px;font-size:16.5px;font-weight:bold;color:#001a1a;font-style:italic;font-family:"Liberation Sans", sans-serif;transform:scaleX(0.7545);text-shadow:0 0 1.5px rgba(0,0,0,.7);'>Rabat-Casablanca</span>
<span class="t" style='left:478.0px;top:31.3px;height:21px;line-height:21px;font-size:16px;font-weight:bold;color:#000;font-style:normal;font-family:"Liberation Sans", sans-serif;transform:scaleX(0.6739);text-shadow:1px 1px 1.5px rgba(0,0,0,.55);'>Sun, Aug 25</span>
<span class="t" style='left:622.0px;top:31.3px;height:21px;line-height:21px;font-size:16px;font-weight:bold;color:#000;font-style:normal;font-family:"Liberation Sans", sans-serif;transform:scaleX(0.6707);text-shadow:1px 1px 1.5px rgba(0,0,0,.55);'>Sun, Aug 25</span>
<span class="t" style='left:766.2px;top:31.3px;height:21px;line-height:21px;font-size:16px;font-weight:bold;color:#000;font-style:normal;font-family:"Liberation Sans", sans-serif;transform:scaleX(0.6717);text-shadow:1px 1px 1.5px rgba(0,0,0,.55);'>Sun, Aug 25</span>
<span class="t" style='left:910.8px;top:31.3px;height:21px;line-height:21px;font-size:16px;font-weight:bold;color:#000;font-style:normal;font-family:"Liberation Sans", sans-serif;transform:scaleX(0.6804);text-shadow:1px 1px 1.5px rgba(0,0,0,.55);'>Sun, Aug 25</span>
<span class="t" style='left:1055.0px;top:31.3px;height:21px;line-height:21px;font-size:16px;font-weight:bold;color:#000;font-style:normal;font-family:"Liberation Sans", sans-serif;transform:scaleX(0.6783);text-shadow:1px 1px 1.5px rgba(0,0,0,.55);'>Sun, Aug 25</span>
<span class="t" style='left:568.3px;top:31.3px;height:21px;line-height:21px;font-size:16px;font-weight:bold;color:#000;font-style:normal;font-family:"Liberation Sans", sans-serif;transform:scaleX(0.6781);text-shadow:1px 1px 1.5px rgba(0,0,0,.55);'>08:40:42</span>
<span class="t" style='left:720.7px;top:31.3px;height:21px;line-height:21px;font-size:16px;font-weight:bold;color:#000;font-style:normal;font-family:"Liberation Sans", sans-serif;transform:scaleX(0.6415);text-shadow:1px 1px 1.5px rgba(0,0,0,.55);'>10:40</span>
<span class="t" style='left:864.5px;top:31.3px;height:21px;line-height:21px;font-size:16px;font-weight:bold;color:#000;font-style:normal;font-family:"Liberation Sans", sans-serif;transform:scaleX(0.6707);text-shadow:1px 1px 1.5px rgba(0,0,0,.55);'>09:40</span>
<span class="t" style='left:1001.0px;top:31.3px;height:21px;line-height:21px;font-size:16px;font-weight:bold;color:#000;font-style:normal;font-family:"Liberation Sans", sans-serif;transform:scaleX(0.6766);text-shadow:1px 1px 1.5px rgba(0,0,0,.55);'>07:40:42</span>
<span class="t" style='left:1153.0px;top:31.3px;height:21px;line-height:21px;font-size:16px;font-weight:bold;color:#000;font-style:normal;font-family:"Liberation Sans", sans-serif;transform:scaleX(0.6951);text-shadow:1px 1px 1.5px rgba(0,0,0,.55);'>07:40</span>
<span class="t" style='left:697.0px;top:30.2px;height:12px;line-height:12px;font-size:9px;font-weight:bold;color:#000;font-style:normal;font-family:"Liberation Sans", sans-serif;transform:scaleX(0.8500);text-shadow:1px 1px 1.5px rgba(0,0,0,.55);'>+2</span>
<span class="t" style='left:841.2px;top:30.2px;height:12px;line-height:12px;font-size:9px;font-weight:bold;color:#000;font-style:normal;font-family:"Liberation Sans", sans-serif;transform:scaleX(0.8300);text-shadow:1px 1px 1.5px rgba(0,0,0,.55);'>+1</span>
<span class="t" style='left:987.0px;top:29.5px;height:12px;line-height:12px;font-size:9px;font-weight:bold;color:#000;font-style:normal;font-family:"Liberation Sans", sans-serif;transform:scaleX(0.8000);text-shadow:1px 1px 1.5px rgba(0,0,0,.55);'>-1</span>
<span class="t" style='left:981.0px;top:41.0px;height:10px;line-height:10px;font-size:8px;font-weight:bold;color:#000;font-style:normal;font-family:"Liberation Sans", sans-serif;transform:scaleX(0.9077);'>)ST</span>
<span class="t" style='left:1131.6px;top:30.2px;height:12px;line-height:12px;font-size:9px;font-weight:bold;color:#000;font-style:normal;font-family:"Liberation Sans", sans-serif;transform:scaleX(0.8500);text-shadow:1px 1px 1.5px rgba(0,0,0,.55);'>-1</span>
<span class="t" style='left:733.0px;top:56.0px;height:20px;line-height:20px;font-size:15px;font-weight:normal;color:#111;font-style:normal;font-family:"Liberation Sans", sans-serif;transform:scaleX(0.9529);'>PF Prodelin 370 cm / Lucenec-Slovakia</span>
<span class="t" style='left:733.0px;top:79.0px;height:20px;line-height:20px;font-size:15px;font-weight:normal;color:#111;font-style:normal;font-family:"Liberation Sans", sans-serif;transform:scaleX(1.0040);'>f=11602,760 MHz_H_ : Atlantis Radio</span>
<span class="t" style='left:761.5px;top:102.0px;height:20px;line-height:20px;font-size:15px;font-weight:normal;color:#111;font-style:normal;font-family:"Liberation Sans", sans-serif;transform:scaleX(0.9766);'>Locked Uptime : 24:27:24</span>
<span class="t" style='left:78.7px;top:113.8px;height:18px;line-height:18px;font-size:13.5px;font-weight:normal;color:#0a0a0a;font-style:normal;font-family:"Liberation Sans", sans-serif;transform:scaleX(0.7607);-webkit-text-stroke:0.3px #0a0a0a;'>BER</span>
<span class="t" style='left:156.6px;top:113.8px;height:18px;line-height:18px;font-size:13.5px;font-weight:normal;color:#0a0a0a;font-style:normal;font-family:"Liberation Sans", sans-serif;transform:scaleX(0.7586);-webkit-text-stroke:0.3px #0a0a0a;'>SNR</span>
<span class="t" style='left:234.3px;top:113.8px;height:18px;line-height:18px;font-size:13.5px;font-weight:normal;color:#0a0a0a;font-style:normal;font-family:"Liberation Sans", sans-serif;transform:scaleX(0.7929);-webkit-text-stroke:0.3px #0a0a0a;'>Quality</span>
<span class="t" style='left:311.0px;top:113.8px;height:18px;line-height:18px;font-size:13.5px;font-weight:normal;color:#0a0a0a;font-style:normal;font-family:"Liberation Sans", sans-serif;transform:scaleX(0.8438);-webkit-text-stroke:0.3px #0a0a0a;'>Level</span>
<span class="t" style='left:13.8px;top:692.9px;height:29px;line-height:29px;font-size:22px;font-weight:normal;color:#0a0a0a;font-style:normal;font-family:"Liberation Sans", sans-serif;transform:scaleX(0.7833);-webkit-text-stroke:0.3px #0a0a0a;'>0</span>
<span class="t" style='left:13.8px;top:625.7px;height:29px;line-height:29px;font-size:22px;font-weight:normal;color:#0a0a0a;font-style:normal;font-family:"Liberation Sans", sans-serif;transform:scaleX(0.7833);-webkit-text-stroke:0.3px #0a0a0a;clip-path:polygon(0 0,100% 0,100% 20.3px,7.9px 20.3px,7.9px 100%,5.1px 100%,5.1px 20.3px,0 20.3px);'>1</span>
<span class="t" style='left:13.8px;top:558.6px;height:29px;line-height:29px;font-size:22px;font-weight:normal;color:#0a0a0a;font-style:normal;font-family:"Liberation Sans", sans-serif;transform:scaleX(0.7833);-webkit-text-stroke:0.3px #0a0a0a;'>2</span>
<span class="t" style='left:13.8px;top:491.4px;height:29px;line-height:29px;font-size:22px;font-weight:normal;color:#0a0a0a;font-style:normal;font-family:"Liberation Sans", sans-serif;transform:scaleX(0.7833);-webkit-text-stroke:0.3px #0a0a0a;'>3</span>
<span class="t" style='left:13.8px;top:424.3px;height:29px;line-height:29px;font-size:22px;font-weight:normal;color:#0a0a0a;font-style:normal;font-family:"Liberation Sans", sans-serif;transform:scaleX(0.7833);-webkit-text-stroke:0.3px #0a0a0a;'>4</span>
<span class="t" style='left:13.8px;top:357.1px;height:29px;line-height:29px;font-size:22px;font-weight:normal;color:#0a0a0a;font-style:normal;font-family:"Liberation Sans", sans-serif;transform:scaleX(0.7833);-webkit-text-stroke:0.3px #0a0a0a;'>5</span>
<span class="t" style='left:13.8px;top:289.9px;height:29px;line-height:29px;font-size:22px;font-weight:normal;color:#0a0a0a;font-style:normal;font-family:"Liberation Sans", sans-serif;transform:scaleX(0.7833);-webkit-text-stroke:0.3px #0a0a0a;'>6</span>
<span class="t" style='left:13.8px;top:222.8px;height:29px;line-height:29px;font-size:22px;font-weight:normal;color:#0a0a0a;font-style:normal;font-family:"Liberation Sans", sans-serif;transform:scaleX(0.7833);-webkit-text-stroke:0.3px #0a0a0a;'>7</span>
<span class="t" style='left:13.8px;top:155.6px;height:29px;line-height:29px;font-size:22px;font-weight:normal;color:#0a0a0a;font-style:normal;font-family:"Liberation Sans", sans-serif;transform:scaleX(0.7833);-webkit-text-stroke:0.3px #0a0a0a;'>8</span>
<span class="t" style='left:425.5px;top:214.3px;height:14px;line-height:14px;font-size:11px;font-weight:normal;color:#383838;font-style:normal;font-family:"Liberation Sans", sans-serif;transform:scaleX(0.7885);-webkit-text-stroke:0.2px #383838;'>2024-08-24 15.13.37, value: 7,5</span>
<span class="t" style='left:575.8px;top:112.3px;height:12px;line-height:12px;font-size:9px;font-weight:bold;color:#18206a;font-style:normal;font-family:"Liberation Serif", serif;transform:scaleX(0.7606);-webkit-text-stroke:0.2px;'><b style="color:#c01818">DX</b>SATCS.COM</span>
<span class="t" style='left:1062.6px;top:83.3px;height:15px;line-height:15px;font-size:11.5px;font-weight:normal;color:#1818a8;font-style:normal;font-family:"Liberation Sans", sans-serif;transform:scaleX(0.7282);-webkit-text-stroke:0.3px #1818a8;'>Transponder (AU) [BS]</span>
<span class="t" style='left:1062.5px;top:110.5px;height:15px;line-height:15px;font-size:11.5px;font-weight:normal;color:#1c1c1c;font-style:normal;font-family:"Liberation Sans", sans-serif;transform:scaleX(0.7466);-webkit-text-stroke:0.25px #1c1c1c;'>Frequency:</span>
<span class="t" style='left:1123.5px;top:110.0px;height:15px;line-height:15px;font-size:11.5px;font-weight:bold;color:#0a560a;font-style:normal;font-family:"Liberation Sans", sans-serif;transform:scaleX(0.7469);-webkit-text-stroke:0.2px #0a560a;'>11602,567 MHz</span>
<span class="t" style='left:1062.5px;top:143.7px;height:15px;line-height:15px;font-size:11.5px;font-weight:normal;color:#1c1c1c;font-style:normal;font-family:"Liberation Sans", sans-serif;transform:scaleX(0.7857);-webkit-text-stroke:0.25px #1c1c1c;'>Polarization:</span>
<span class="t" style='left:1123.5px;top:143.2px;height:15px;line-height:15px;font-size:11.5px;font-weight:bold;color:#0a560a;font-style:normal;font-family:"Liberation Sans", sans-serif;transform:scaleX(0.7500);-webkit-text-stroke:0.2px #0a560a;'>Horizontal</span>
<span class="t" style='left:1062.5px;top:176.8px;height:15px;line-height:15px;font-size:11.5px;font-weight:normal;color:#1c1c1c;font-style:normal;font-family:"Liberation Sans", sans-serif;transform:scaleX(0.7362);-webkit-text-stroke:0.25px #1c1c1c;'>Symbol Rate:</span>
<span class="t" style='left:1123.5px;top:176.3px;height:15px;line-height:15px;font-size:11.5px;font-weight:bold;color:#0a560a;font-style:normal;font-family:"Liberation Sans", sans-serif;transform:scaleX(0.7171);-webkit-text-stroke:0.2px #0a560a;'>171,002 KS/s</span>
<span class="t" style='left:1062.5px;top:209.9px;height:15px;line-height:15px;font-size:11.5px;font-weight:normal;color:#1c1c1c;font-style:normal;font-family:"Liberation Sans", sans-serif;transform:scaleX(0.7700);-webkit-text-stroke:0.25px #1c1c1c;'>Standard:</span>
<span class="t" style='left:1123.5px;top:209.4px;height:15px;line-height:15px;font-size:11.5px;font-weight:bold;color:#0a560a;font-style:normal;font-family:"Liberation Sans", sans-serif;transform:scaleX(0.5357);-webkit-text-stroke:0.2px #0a560a;'>DVB-S2</span>
<span class="t" style='left:1062.5px;top:243.1px;height:15px;line-height:15px;font-size:11.5px;font-weight:normal;color:#1c1c1c;font-style:normal;font-family:"Liberation Sans", sans-serif;transform:scaleX(0.8390);-webkit-text-stroke:0.25px #1c1c1c;'>Modulation:</span>
<span class="t" style='left:1123.5px;top:242.6px;height:15px;line-height:15px;font-size:11.5px;font-weight:bold;color:#0a560a;font-style:normal;font-family:"Liberation Sans", sans-serif;transform:scaleX(0.6569);-webkit-text-stroke:0.2px #0a560a;'>QPSK-S2</span>
<span class="t" style='left:1062.5px;top:276.2px;height:15px;line-height:15px;font-size:11.5px;font-weight:normal;color:#1c1c1c;font-style:normal;font-family:"Liberation Sans", sans-serif;transform:scaleX(0.6346);-webkit-text-stroke:0.25px #1c1c1c;'>FEC:</span>
<span class="t" style='left:1123.5px;top:275.8px;height:15px;line-height:15px;font-size:11.5px;font-weight:bold;color:#0a560a;font-style:normal;font-family:"Liberation Sans", sans-serif;transform:scaleX(0.8750);-webkit-text-stroke:0.2px #0a560a;'>3/4</span>
<span class="t" style='left:1062.5px;top:309.4px;height:15px;line-height:15px;font-size:11.5px;font-weight:normal;color:#1c1c1c;font-style:normal;font-family:"Liberation Sans", sans-serif;transform:scaleX(0.8158);-webkit-text-stroke:0.25px #1c1c1c;'>RollOff:</span>
<span class="t" style='left:1123.5px;top:308.9px;height:15px;line-height:15px;font-size:11.5px;font-weight:bold;color:#0a560a;font-style:normal;font-family:"Liberation Sans", sans-serif;transform:scaleX(0.6955);-webkit-text-stroke:0.2px #0a560a;'>0.20</span>
<span class="t" style='left:1062.5px;top:342.5px;height:15px;line-height:15px;font-size:11.5px;font-weight:normal;color:#1c1c1c;font-style:normal;font-family:"Liberation Sans", sans-serif;transform:scaleX(0.7885);-webkit-text-stroke:0.25px #1c1c1c;'>Pilot:</span>
<span class="t" style='left:1123.5px;top:342.0px;height:15px;line-height:15px;font-size:11.5px;font-weight:bold;color:#0a560a;font-style:normal;font-family:"Liberation Sans", sans-serif;transform:scaleX(0.7765);-webkit-text-stroke:0.2px #0a560a;'>ON</span>
<span class="t" style='left:1062.5px;top:375.7px;height:15px;line-height:15px;font-size:11.5px;font-weight:normal;color:#1c1c1c;font-style:normal;font-family:"Liberation Sans", sans-serif;transform:scaleX(0.7538);-webkit-text-stroke:0.25px #1c1c1c;'>Spectrum:</span>
<span class="t" style='left:1123.5px;top:375.2px;height:15px;line-height:15px;font-size:11.5px;font-weight:bold;color:#0a560a;font-style:normal;font-family:"Liberation Sans", sans-serif;transform:scaleX(0.7333);-webkit-text-stroke:0.2px #0a560a;'>Inverted</span>
<span class="t" style='left:1062.5px;top:408.8px;height:15px;line-height:15px;font-size:11.5px;font-weight:normal;color:#1c1c1c;font-style:normal;font-family:"Liberation Sans", sans-serif;transform:scaleX(0.7266);-webkit-text-stroke:0.25px #1c1c1c;'>Frame Type:</span>
<span class="t" style='left:1123.5px;top:408.3px;height:15px;line-height:15px;font-size:11.5px;font-weight:bold;color:#0a560a;font-style:normal;font-family:"Liberation Sans", sans-serif;transform:scaleX(0.7318);-webkit-text-stroke:0.2px #0a560a;'>Long Frame</span>
<span class="t" style='left:1062.5px;top:442.0px;height:15px;line-height:15px;font-size:11.5px;font-weight:normal;color:#1c1c1c;font-style:normal;font-family:"Liberation Sans", sans-serif;transform:scaleX(0.7778);-webkit-text-stroke:0.25px #1c1c1c;'>Code Mode:</span>
<span class="t" style='left:1123.5px;top:441.5px;height:15px;line-height:15px;font-size:11.5px;font-weight:bold;color:#0a560a;font-style:normal;font-family:"Liberation Sans", sans-serif;transform:scaleX(0.7423);-webkit-text-stroke:0.2px #0a560a;'>CCM</span>
<span class="t" style='left:1062.5px;top:475.1px;height:15px;line-height:15px;font-size:11.5px;font-weight:normal;color:#1c1c1c;font-style:normal;font-family:"Liberation Sans", sans-serif;transform:scaleX(0.7538);-webkit-text-stroke:0.25px #1c1c1c;'>Stream type:</span>
<span class="t" style='left:1123.5px;top:474.6px;height:15px;line-height:15px;font-size:11.5px;font-weight:bold;color:#0a560a;font-style:normal;font-family:"Liberation Sans", sans-serif;transform:scaleX(0.7189);-webkit-text-stroke:0.2px #0a560a;'>Transport</span>
<span class="t" style='left:1062.5px;top:508.3px;height:15px;line-height:15px;font-size:11.5px;font-weight:normal;color:#1c1c1c;font-style:normal;font-family:"Liberation Sans", sans-serif;transform:scaleX(0.6034);-webkit-text-stroke:0.25px #1c1c1c;'>ISSYI</span>
<span class="t" style='left:1123.5px;top:507.8px;height:15px;line-height:15px;font-size:11.5px;font-weight:bold;color:#0a560a;font-style:normal;font-family:"Liberation Sans", sans-serif;transform:scaleX(0.6826);-webkit-text-stroke:0.2px #0a560a;'>OFF</span>
<span class="t" style='left:1062.5px;top:541.5px;height:15px;line-height:15px;font-size:11.5px;font-weight:normal;color:#1c1c1c;font-style:normal;font-family:"Liberation Sans", sans-serif;transform:scaleX(0.7037);-webkit-text-stroke:0.25px #1c1c1c;'>NPD:</span>
<span class="t" style='left:1123.5px;top:541.0px;height:15px;line-height:15px;font-size:11.5px;font-weight:bold;color:#0a560a;font-style:normal;font-family:"Liberation Sans", sans-serif;transform:scaleX(0.6826);-webkit-text-stroke:0.2px #0a560a;'>OFF</span>
<span class="t" style='left:1062.5px;top:574.6px;height:15px;line-height:15px;font-size:11.5px;font-weight:normal;color:#1c1c1c;font-style:normal;font-family:"Liberation Sans", sans-serif;transform:scaleX(0.7000);-webkit-text-stroke:0.25px #1c1c1c;'>RF Level:</span>
<span class="t" style='left:1123.5px;top:574.1px;height:15px;line-height:15px;font-size:11.5px;font-weight:bold;color:#0a560a;font-style:normal;font-family:"Liberation Sans", sans-serif;transform:scaleX(0.7444);-webkit-text-stroke:0.2px #0a560a;'>-56 dBm</span>
<span class="t" style='left:1062.5px;top:607.8px;height:15px;line-height:15px;font-size:11.5px;font-weight:normal;color:#1c1c1c;font-style:normal;font-family:"Liberation Sans", sans-serif;transform:scaleX(0.7366);-webkit-text-stroke:0.25px #1c1c1c;'>BitRate:</span>
<span class="t" style='left:1123.5px;top:607.2px;height:15px;line-height:15px;font-size:11.5px;font-weight:bold;color:#0a560a;font-style:normal;font-family:"Liberation Sans", sans-serif;transform:scaleX(0.7769);-webkit-text-stroke:0.2px #0a560a;'>0,247 Mbit/s</span>
<span class="t" style='left:1062.5px;top:640.9px;height:15px;line-height:15px;font-size:11.5px;font-weight:normal;color:#1c1c1c;font-style:normal;font-family:"Liberation Sans", sans-serif;transform:scaleX(0.7868);-webkit-text-stroke:0.25px #1c1c1c;'>CarrierWidth:</span>
<span class="t" style='left:1123.5px;top:640.4px;height:15px;line-height:15px;font-size:11.5px;font-weight:bold;color:#0a560a;font-style:normal;font-family:"Liberation Sans", sans-serif;transform:scaleX(0.7411);-webkit-text-stroke:0.2px #0a560a;'>0,205 MHz</span>
<span class="t" style='left:1062.5px;top:690.0px;height:15px;line-height:15px;font-size:11.5px;font-weight:normal;color:#1c1c1c;font-style:normal;font-family:"Liberation Sans", sans-serif;transform:scaleX(0.6829);-webkit-text-stroke:0.25px #1c1c1c;'>MIS (0):</span>
<span class="t" style='left:1127.0px;top:690.5px;height:14px;line-height:14px;font-size:11px;font-weight:normal;color:#333;font-style:normal;font-family:"Liberation Sans", sans-serif;transform:scaleX(0.7742);'>Single</span>
<span class="t" style='left:8.0px;top:780.0px;height:15px;line-height:15px;font-size:11.5px;font-weight:normal;color:#0a0a0a;font-style:normal;font-family:"Liberation Sans", sans-serif;transform:scaleX(0.7125);-webkit-text-stroke:0.4px #0a0a0a;'>Present</span>
<span class="t" style='left:8.0px;top:803.2px;height:15px;line-height:15px;font-size:11.5px;font-weight:normal;color:#0a0a0a;font-style:normal;font-family:"Liberation Sans", sans-serif;transform:scaleX(0.7292);-webkit-text-stroke:0.4px #0a0a0a;'>Lock</span>
<span class="t" style='left:110.5px;top:780.0px;height:15px;line-height:15px;font-size:11.5px;font-weight:normal;color:#0a0a0a;font-style:normal;font-family:"Liberation Sans", sans-serif;transform:scaleX(0.6842);-webkit-text-stroke:0.4px #0a0a0a;'>Level: 31%</span>
<span class="t" style='left:110.5px;top:803.2px;height:15px;line-height:15px;font-size:11.5px;font-weight:normal;color:#0a0a0a;font-style:normal;font-family:"Liberation Sans", sans-serif;transform:scaleX(0.7153);-webkit-text-stroke:0.4px #0a0a0a;'>Quality: 100%</span>
<span class="t" style='left:604.0px;top:780.0px;height:15px;line-height:15px;font-size:11.5px;font-weight:normal;color:#0a0a0a;font-style:normal;font-family:"Liberation Sans", sans-serif;transform:scaleX(0.7011);-webkit-text-stroke:0.4px #0a0a0a;'>preBER: &lt;1.0E-7</span>
<span class="t" style='left:852.0px;top:780.0px;height:15px;line-height:15px;font-size:11.5px;font-weight:normal;color:#0a0a0a;font-style:normal;font-family:"Liberation Sans", sans-serif;transform:scaleX(0.6831);-webkit-text-stroke:0.4px #0a0a0a;'>BER: &lt;1.0E-7</span>
<span class="t" style='left:607.0px;top:803.2px;height:15px;line-height:15px;font-size:11.5px;font-weight:normal;color:#0a0a0a;font-style:normal;font-family:"Liberation Sans", sans-serif;transform:scaleX(0.7416);-webkit-text-stroke:0.4px #0a0a0a;'>SNR: 6,2 dB (Margin: 2,2 dB | Very Poor)</span>
<span class="t" style='left:1099.5px;top:780.0px;height:15px;line-height:15px;font-size:11.5px;font-weight:normal;color:#0a0a0a;font-style:normal;font-family:"Liberation Sans", sans-serif;transform:scaleX(0.7717);-webkit-text-stroke:0.4px #0a0a0a;'>Input (~235 Kbps)</span>
<span class="t" style='left:1099.5px;top:803.2px;height:15px;line-height:15px;font-size:11.5px;font-weight:normal;color:#0a0a0a;font-style:normal;font-family:"Liberation Sans", sans-serif;transform:scaleX(0.6860);-webkit-text-stroke:0.4px #0a0a0a;'>Sync TS</span>
<span class="t" style='left:138.5px;top:830.5px;height:15px;line-height:15px;font-size:11.5px;font-weight:normal;color:#111;font-style:normal;font-family:"Liberation Sans", sans-serif;transform:scaleX(0.8099);-webkit-text-stroke:0.4px #0a0a0a;'>Locked -&gt; Uptime: 24:27:24</span>
<span class="t" style='left:541.0px;top:830.5px;height:15px;line-height:15px;font-size:11.5px;font-weight:normal;color:#111;font-style:normal;font-family:"Liberation Sans", sans-serif;transform:scaleX(0.7554);-webkit-text-stroke:0.4px #0a0a0a;'>SYNC 0 | TEI 401 | CC 338</span>
<span class="t" style='left:913.5px;top:830.5px;height:15px;line-height:15px;font-size:11.5px;font-weight:normal;color:#111;font-style:normal;font-family:"Liberation Sans", sans-serif;transform:scaleX(0.7854);-webkit-text-stroke:0.4px #0a0a0a;'>Best signal: 7,4 dB (2024-08-24 15:13)</span>
</div>
</body></html>
